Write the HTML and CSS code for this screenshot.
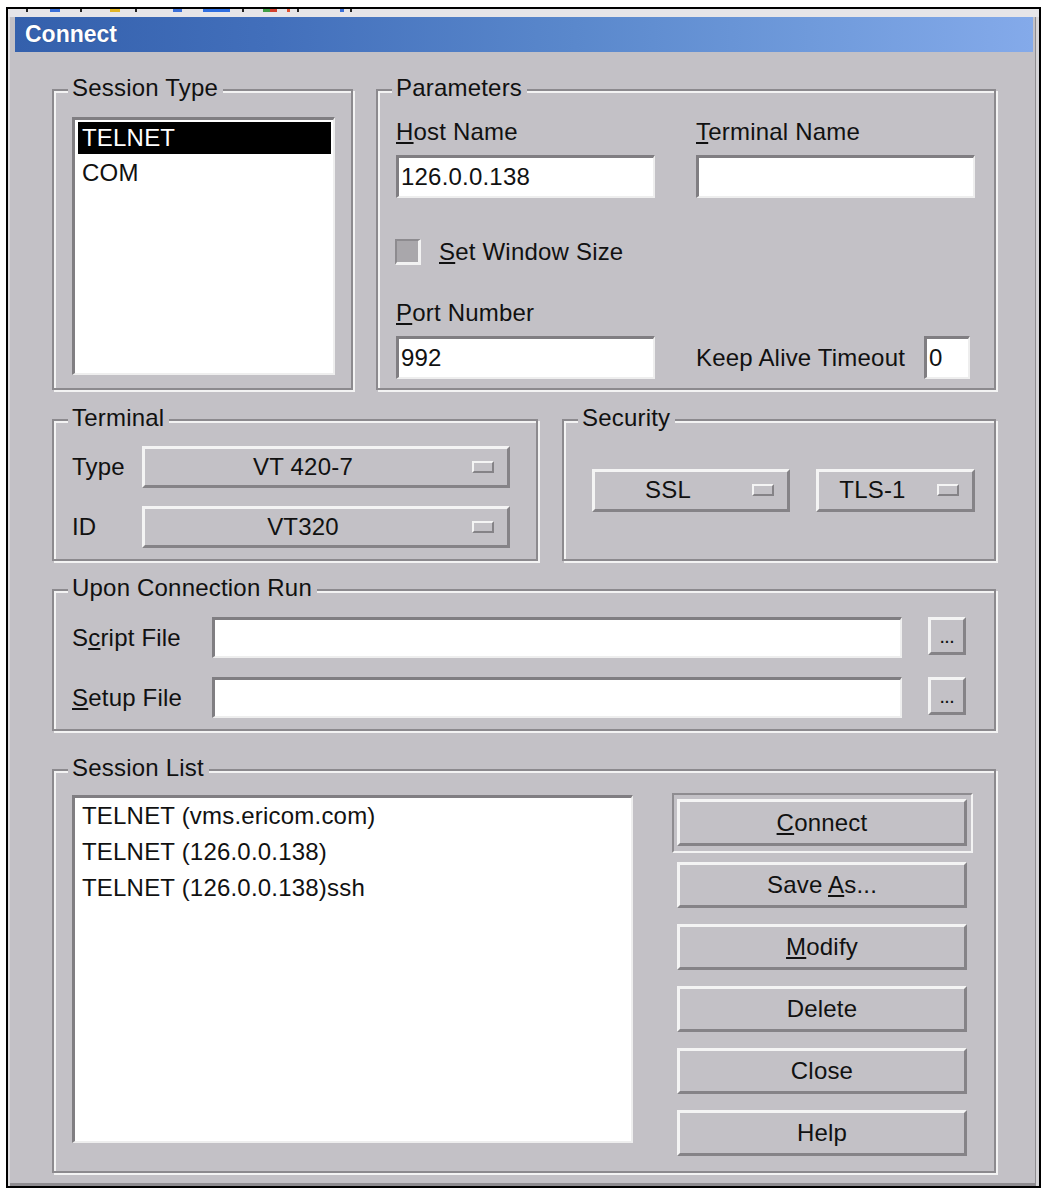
FILE: index.html
```html
<!DOCTYPE html>
<html lang="en">
<head>
<meta charset="utf-8">
<title>Connect</title>
<link rel="stylesheet" href="styles.css">
</head>
<body>
<div class="frame">
  <div class="strip"></div>
  <div class="titlebar">Connect</div>

  <div class="dialog">
    <div class="row row-top">
      <div class="group session-type">
        <span class="legend">Session Type</span>
        <div class="listbox">
          <div class="item selected">TELNET</div>
          <div class="item">COM</div>
        </div>
      </div>

      <div class="group params">
        <span class="legend">Parameters</span>
        <div class="param-grid">
          <div class="field">
            <div class="label"><u>H</u>ost Name</div>
            <div class="input">126.0.0.138</div>
          </div>
          <div class="field">
            <div class="label"><u>T</u>erminal Name</div>
            <div class="input"></div>
          </div>
        </div>
        <div class="check-row">
          <span class="checkbox"></span>
          <span><u>S</u>et Window Size</span>
        </div>
        <div class="param-grid port-grid">
          <div class="field">
            <div class="label"><u>P</u>ort Number</div>
            <div class="input">992</div>
          </div>
          <div class="keepalive">
            <span>Keep Alive Timeout</span>
            <div class="input tiny">0</div>
          </div>
        </div>
      </div>
    </div>

    <div class="row row-mid">
      <div class="group terminal">
        <span class="legend">Terminal</span>
        <div class="opt-row">
          <span class="opt-label">Type</span>
          <div class="dropdown dd-term"><span class="dd-text">VT 420-7</span><span class="dd-mark"></span></div>
        </div>
        <div class="opt-row">
          <span class="opt-label">ID</span>
          <div class="dropdown dd-term"><span class="dd-text">VT320</span><span class="dd-mark"></span></div>
        </div>
      </div>

      <div class="group security">
        <span class="legend">Security</span>
        <div class="dropdown dd-ssl"><span class="dd-text">SSL</span><span class="dd-mark"></span></div>
        <div class="dropdown dd-tls"><span class="dd-text">TLS-1</span><span class="dd-mark"></span></div>
      </div>
    </div>

    <div class="group upon">
      <span class="legend">Upon Connection Run</span>
      <div class="file-row">
        <span class="file-label">S<u>c</u>ript File</span>
        <div class="input file-input"></div>
        <button class="btn browse" type="button"><span>...</span></button>
      </div>
      <div class="file-row">
        <span class="file-label"><u>S</u>etup File</span>
        <div class="input file-input"></div>
        <button class="btn browse" type="button"><span>...</span></button>
      </div>
    </div>

    <div class="group session-list">
      <span class="legend">Session List</span>
      <div class="listbox sessions">
        <div class="item">TELNET (vms.ericom.com)</div>
        <div class="item">TELNET (126.0.0.138)</div>
        <div class="item">TELNET (126.0.0.138)ssh</div>
      </div>
      <div class="actions">
        <div class="default-frame">
          <button class="btn action" type="button"><u>C</u>onnect</button>
        </div>
        <button class="btn action" type="button">Save <u>A</u>s...</button>
        <button class="btn action" type="button"><u>M</u>odify</button>
        <button class="btn action" type="button">Delete</button>
        <button class="btn action" type="button">Close</button>
        <button class="btn action" type="button">Help</button>
      </div>
    </div>
  </div>
</div>
</body>
</html>
```

FILE: styles.css
```css
* {
  box-sizing: border-box;
}

html,
body {
  margin: 0;
  background: #ffffff;
}

body {
  font-family: "Liberation Sans", Arial, Helvetica, sans-serif;
  font-size: 24px;
  letter-spacing: 0.2px;
  color: #111111;
}

u {
  text-decoration: underline;
  text-underline-offset: 2px;
  text-decoration-thickness: 2px;
}

/* outer window frame */
.frame {
  margin: 7px 0 0 6px;
  width: 1035px;
  height: 1181px;
  border: 2px solid #000000;
  background: #c3c1c6;
  display: flex;
  flex-direction: column;
  box-shadow: inset 2px 0 0 #dedde0, inset -3px 0 0 #d6d5d8, inset -4px -3px 0 #8e8c90;
}

/* sliver of the toolbar behind the dialog */
.strip {
  height: 8px;
  background-color: #e6e5e8;
  background-repeat: no-repeat;
  background-image:
    linear-gradient(#222, #222), linear-gradient(#3a6fd8, #3a6fd8),
    linear-gradient(#222, #222), linear-gradient(#e2b526, #e2b526),
    linear-gradient(#222, #222), linear-gradient(#3a6fd8, #3a6fd8),
    linear-gradient(#2f6ee0, #2f6ee0), linear-gradient(#222, #222),
    linear-gradient(#3f9e45, #3f9e45), linear-gradient(#d2412f, #d2412f),
    linear-gradient(#e05030, #e05030), linear-gradient(#222, #222),
    linear-gradient(#3a6fd8, #3a6fd8), linear-gradient(#222, #222);
  background-size:
    2px 3px, 10px 3px, 2px 3px, 10px 3px, 2px 3px, 9px 3px, 27px 3px,
    2px 3px, 7px 3px, 7px 3px, 3px 3px, 2px 3px, 4px 3px, 2px 3px;
  background-position:
    18px 0, 42px 0, 72px 0, 102px 0, 127px 0, 165px 0, 195px 0,
    234px 0, 255px 0, 262px 0, 279px 0, 289px 0, 332px 0, 342px 0;
}

.titlebar {
  height: 35px;
  margin: 0 6px 0 7px;
  padding-left: 10px;
  background: linear-gradient(90deg, #3460ac 0%, #426fbb 25%, #5a88cc 55%, #6f9adb 78%, #84aaea 100%);
  color: #ffffff;
  font-weight: bold;
  font-size: 23px;
  letter-spacing: 0;
  line-height: 35px;
  text-shadow: 0 0 1px rgba(20, 40, 90, 0.6);
}

.dialog {
  flex: 1;
  padding: 37px 43px 0 44px;
}

/* etched group box */
.group {
  position: relative;
  border: 2px solid #8c8a8e;
  box-shadow: inset 2px 2px 0 #f3f3f3, 2px 2px 0 #f3f3f3;
}

.legend {
  position: absolute;
  top: -17px;
  left: 14px;
  padding: 0 5px 0 4px;
  line-height: 28px;
  background: #c3c1c6;
  white-space: nowrap;
}

.row {
  display: flex;
}

.row-top {
  gap: 23px;
}

.row-mid {
  gap: 24px;
  margin-top: 29px;
}

/* sunken fields */
.listbox,
.input {
  background: #ffffff;
  border-top: 3px solid #807e82;
  border-left: 3px solid #807e82;
  border-bottom: 2px solid #eeeeee;
  border-right: 2px solid #eeeeee;
}

.input {
  height: 43px;
  padding-left: 2px;
  line-height: 38px;
  white-space: nowrap;
}

/* session type */
.session-type {
  width: 301px;
  height: 301px;
  padding: 26px 16px 13px 18px;
}

.session-type .listbox {
  height: 100%;
  padding-top: 2px;
}

.item {
  padding-left: 4px;
  white-space: nowrap;
}

.session-type .item {
  margin: 0 2px 0 3px;
  height: 34px;
  line-height: 32px;
}

.session-type .item + .item {
  line-height: 38px;
}

.item.selected {
  height: 32px;
  background: #000000;
  color: #ffffff;
}

/* parameters */
.params {
  width: 620px;
  height: 301px;
  padding: 27px 19px 0 18px;
}

.param-grid {
  display: grid;
  grid-template-columns: 259px 279px;
  column-gap: 41px;
}

.label {
  line-height: 28px;
  margin-bottom: 9px;
  white-space: nowrap;
}

.check-row {
  display: flex;
  align-items: center;
  gap: 18px;
  height: 28px;
  margin-top: 40px;
}

.checkbox {
  width: 26px;
  height: 26px;
  margin-left: -1px;
  background: #a9a7ab;
  border-top: 2px solid #8d8b8f;
  border-left: 2px solid #8d8b8f;
  border-bottom: 3px solid #f2f2f2;
  border-right: 3px solid #f2f2f2;
}

.port-grid {
  margin-top: 33px;
}

.keepalive {
  align-self: end;
  display: flex;
  align-items: center;
  height: 43px;
  white-space: nowrap;
}

.input.tiny {
  width: 46px;
  margin-left: auto;
  margin-right: 5px;
}

/* raised controls */
.dropdown,
.btn {
  background: #c3c1c6;
  border-top: 3px solid #f4f4f4;
  border-left: 3px solid #f4f4f4;
  border-bottom: 3px solid #858387;
  border-right: 3px solid #858387;
}

.dropdown {
  display: flex;
  align-items: center;
  height: 42px;
  white-space: nowrap;
}

.dd-text {
  flex: 1;
  text-align: center;
  padding-right: 11px;
}

.dd-mark {
  width: 22px;
  height: 12px;
  margin-right: 13px;
  border-top: 2px solid #f4f4f4;
  border-left: 2px solid #f4f4f4;
  border-bottom: 2px solid #858387;
  border-right: 2px solid #858387;
}

/* terminal */
.terminal {
  width: 486px;
  height: 142px;
  padding: 25px 0 0 18px;
}

.opt-row {
  display: flex;
  align-items: center;
  height: 42px;
}

.opt-row + .opt-row {
  margin-top: 18px;
}

.opt-label {
  width: 70px;
}

.dd-term {
  width: 368px;
}

/* security */
.security {
  width: 434px;
  height: 142px;
  padding-left: 28px;
  display: flex;
  align-items: center;
  gap: 26px;
}

.security .dropdown {
  height: 43px;
}

.dd-ssl {
  width: 198px;
}

.dd-tls {
  width: 159px;
}

/* upon connection run */
.upon {
  margin-top: 28px;
  height: 142px;
  padding: 26px 0 0 18px;
}

.file-row {
  display: flex;
  align-items: flex-start;
  height: 41px;
}

.file-row + .file-row {
  margin-top: 19px;
}

.file-label {
  width: 140px;
  line-height: 41px;
  white-space: nowrap;
}

.input.file-input {
  width: 690px;
  height: 41px;
}

.btn {
  font-family: inherit;
  font-size: 24px;
  letter-spacing: 0.2px;
  color: #111111;
  padding: 0;
  margin: 0;
  cursor: default;
}

.browse {
  width: 38px;
  height: 38px;
  margin-left: 26px;
  display: flex;
  align-items: flex-end;
  justify-content: center;
  padding-bottom: 7px;
}

.browse span {
  font-size: 14px;
  font-weight: bold;
  letter-spacing: 1px;
  line-height: 14px;
  padding-left: 1px;
}

/* session list */
.session-list {
  margin-top: 38px;
  height: 404px;
  padding: 24px 0 0 18px;
  display: flex;
  gap: 39px;
}

.listbox.sessions {
  width: 561px;
  height: 348px;
}

.sessions .item {
  height: 36px;
  line-height: 36px;
  padding-left: 7px;
}

.actions {
  width: 301px;
  margin-top: -2px;
  display: flex;
  flex-direction: column;
}

.default-frame {
  width: 301px;
  padding: 4px 4px 5px 3px;
  border-top: 2px solid #8e8c90;
  border-left: 2px solid #8e8c90;
  border-bottom: 2px solid #f3f3f3;
  border-right: 2px solid #f3f3f3;
  margin-bottom: -7px;
}

.action {
  display: block;
  width: 290px;
  height: 46px;
  margin: 16px 0 0 5px;
  line-height: 38px;
  text-align: center;
}

.default-frame .action {
  margin: 0;
  height: 47px;
}
```
